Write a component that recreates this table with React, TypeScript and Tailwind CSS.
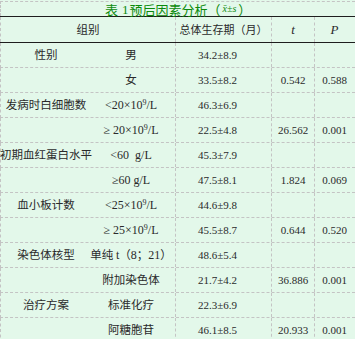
const rows: { g?: string; s: React.ReactNode; v: string; t?: string; p?: string }[] = [
  { g: "性别", s: "男", v: "34.2±8.9" },
  { s: "女", v: "33.5±8.2", t: "0.542", p: "0.588" },
  {
    g: "发病时白细胞数",
    s: (
      <span className="font-['Liberation_Serif'] text-[12px]">
        &lt;20×10<sup className="text-[8px]">9</sup>/L
      </span>
    ),
    v: "46.3±6.9",
  },
  {
    s: (
      <span className="font-['Liberation_Serif'] text-[12px]">
        ≥ 20×10<sup className="text-[8px]">9</sup>/L
      </span>
    ),
    v: "22.5±4.8",
    t: "26.562",
    p: "0.001",
  },
  {
    g: "初期血红蛋白水平",
    s: <span className="font-['Liberation_Serif'] text-[12px] whitespace-pre">&lt;60  g/L</span>,
    v: "45.3±7.9",
  },
  {
    s: <span className="font-['Liberation_Serif'] text-[12px]">≥60 g/L</span>,
    v: "47.5±8.1",
    t: "1.824",
    p: "0.069",
  },
  {
    g: "血小板计数",
    s: (
      <span className="font-['Liberation_Serif'] text-[12px]">
        &lt;25×10<sup className="text-[8px]">9</sup>/L
      </span>
    ),
    v: "44.6±9.8",
  },
  {
    s: (
      <span className="font-['Liberation_Serif'] text-[12px]">
        ≥ 25×10<sup className="text-[8px]">9</sup>/L
      </span>
    ),
    v: "45.5±8.7",
    t: "0.644",
    p: "0.520",
  },
  {
    g: "染色体核型",
    s: (
      <span className="whitespace-nowrap">
        单纯 <span className="font-['Liberation_Serif'] text-[12px]">t</span>（
        <span className="font-['Liberation_Serif'] text-[12px]">8</span>；
        <span className="font-['Liberation_Serif'] text-[12px]">21</span>）
      </span>
    ),
    v: "48.6±5.4",
  },
  { s: "附加染色体", v: "21.7±4.2", t: "36.886", p: "0.001" },
  { g: "治疗方案", s: "标准化疗", v: "22.3±6.9" },
  { s: "阿糖胞苷", v: "46.1±8.5", t: "20.933", p: "0.001" },
];

export default function App() {
  return (
    <div className="w-[355px] h-[339px] overflow-hidden bg-[#e3f8ea] pt-px text-[#2a2a2a] font-['Liberation_Serif','Noto_Sans_CJK_SC',serif]">
      <div className="h-[15px] border-t border-l border-dashed border-[#c4c4c4]">
        <div className="h-[14px] pl-[104px] flex items-center text-[13px] leading-none text-[#0b8a0b] whitespace-nowrap font-['Noto_Sans_CJK_SC',sans-serif]">
          表 <span className="font-['Liberation_Serif'] ml-[4px] mr-[1px]">1</span>预后因素分析（
          <span className="text-[10px] font-['Liberation_Serif'] italic mx-[2px]">x̄±s</span>）
        </div>
      </div>
      <div className="h-px bg-[#1e1e1e]" />
      <div className="h-[25px] flex border-l border-dashed border-[#c4c4c4]">
        <div className="w-[175px] border-r border-dashed border-[#c4c4c4] flex items-center justify-center text-[11.5px] font-['Noto_Sans_CJK_SC',sans-serif]">
          组别
        </div>
        <div className="w-[96px] border-r border-dashed border-[#c4c4c4] flex items-center justify-center text-[11px] font-['Noto_Sans_CJK_SC',sans-serif]">
          总体生存期（月）
        </div>
        <div className="w-[43px] border-r border-dashed border-[#c4c4c4] flex items-center justify-center italic text-[13px]">
          t
        </div>
        <div className="w-[39px] flex items-center justify-center italic text-[13px]">P</div>
      </div>
      <div className="h-px bg-[#1e1e1e]" />
      {rows.map((r, i) => (
        <div
          key={i}
          className="h-[25px] flex border-l border-b border-dashed border-[#c4c4c4]"
        >
          <div className="w-[175px] border-r border-dashed border-[#c4c4c4] flex items-center text-[11.5px] font-['Noto_Sans_CJK_SC',sans-serif]">
            <div className="w-[90px] flex justify-center whitespace-nowrap">{r.g}</div>
            <div className="w-[80px] flex justify-center whitespace-nowrap">{r.s}</div>
          </div>
          <div className="w-[96px] border-r border-dashed border-[#c4c4c4] flex items-center pl-[22px] text-[11px]">
            {r.v}
          </div>
          <div className="w-[43px] border-r border-dashed border-[#c4c4c4] flex items-center justify-center text-[11px]">
            {r.t}
          </div>
          <div className="w-[39px] flex items-center justify-center text-[11px]">{r.p}</div>
        </div>
      ))}
    </div>
  );
}
